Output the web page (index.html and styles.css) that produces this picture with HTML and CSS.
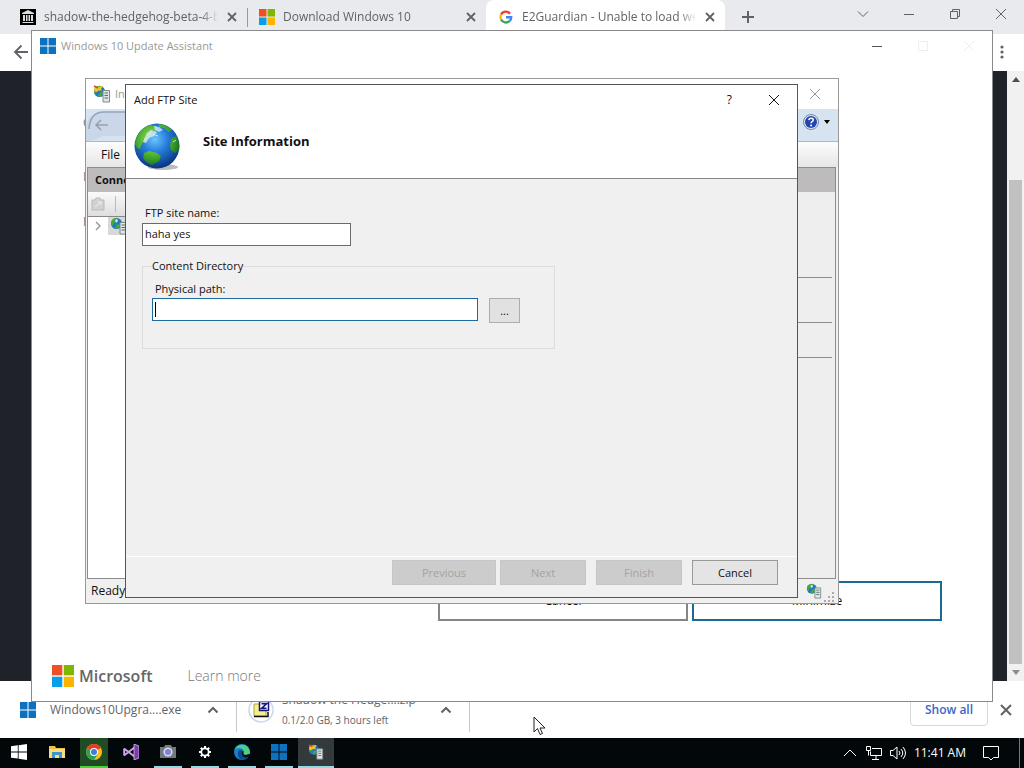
FILE: index.html
```html
<!DOCTYPE html>
<html lang="en">
<head>
    <meta charset="UTF-8">
    <meta name="viewport" content="width=device-width, initial-scale=1.0">
    <title>Add FTP Site</title>
    <link rel="stylesheet" href="styles.css">
</head>
<body>

<!-- shared icons -->
<svg class="defs" aria-hidden="true">
    <symbol id="close" viewBox="0 0 12 12"><path d="M1 1l10 10M11 1L1 11" fill="none" stroke="currentColor"/></symbol>
    <symbol id="tab-close" viewBox="0 0 16 16"><path d="M4 4l8 8M12 4l-8 8" fill="none" stroke="currentColor" stroke-width="1.8"/></symbol>
    <symbol id="minimize" viewBox="0 0 12 12"><path d="M1 6.5h10" stroke="currentColor"/></symbol>
    <symbol id="chevron-up" viewBox="0 0 14 14"><path d="M2.500 9.500L7 5l4.500 4.500" fill="none" stroke="currentColor" stroke-width="2"/></symbol>
    <symbol id="windows" viewBox="0 0 16 16"><path d="M0 0h7.500v7.500H0zM8.500 0H16v7.500H8.500zM0 8.500h7.500V16H0zM8.500 8.500H16V16H8.500z" fill="#0c72c0"/></symbol>
    <symbol id="microsoft" viewBox="0 0 16 16">
        <path d="M0 0h7.500v7.500H0z" fill="#f04e23"/><path d="M8.500 0H16v7.500H8.500z" fill="#7db700"/>
        <path d="M0 8.500h7.500V16H0z" fill="#089fe8"/><path d="M8.500 8.500H16V16H8.500z" fill="#fcb400"/>
    </symbol>
    <symbol id="server" viewBox="0 0 18 18">
        <circle cx="6.500" cy="6.500" r="5.500" fill="#1f78c4"/>
        <path d="M2 3q3-3 6-2l-1 3-3 2-1 3-2-2zM7 7l3 1-2 4-3-1z" fill="#49a63c"/>
        <path d="M5 3l2-1 1 2-2 2z" fill="#c9ecff"/>
        <path d="M10 5.500h6.500v11.500H10z" fill="#dfe7e6" stroke="#7d8c8a"/>
        <path d="M11.500 8h3.500M11.500 10.500h3.500M11.500 13h3.500" stroke="#53706d"/>
    </symbol>
    <symbol id="iis" viewBox="0 0 18 18">
        <use href="#server"/>
        <path d="M1 6l1-5 3 1 5-1-2 3 1 2-3-1-2 2z" fill="#f1c624"/>
        <path d="M1 1l4 2" stroke="#d54724" stroke-width="1.500"/>
    </symbol>
</svg>

<div class="desktop">

    <main class="browser">
        <div class="tabs">
            <div class="tab">
                <svg class="icon" viewBox="0 0 16 16"><path d="M0 0h16v16H0z"/><path d="M8 1l6 3v1H2V4zM2.500 13h11v1h-11zM3 6h2v6H3zM6 6h1.500v6H6zM8.500 6H10v6H8.500zM11 6h2v6h-2z" fill="#ddd"/></svg>
                <span class="tab-title">shadow-the-hedgehog-beta-4-b</span>
                <button class="tab-close" aria-label="Close tab"><svg class="icon"><use href="#tab-close"/></svg></button>
            </div>
            <div class="tab first">
                <svg class="icon"><use href="#microsoft"/></svg>
                <span class="tab-title">Download Windows 10</span>
                <button class="tab-close" aria-label="Close tab"><svg class="icon"><use href="#tab-close"/></svg></button>
            </div>
            <div class="tab active">
                <svg class="icon" viewBox="0 0 16 16" fill="none" stroke-width="2.400">
                    <path d="M3.100 5.500A5.300 5.300 0 0 1 12 4.700" stroke="#ea4335"/>
                    <path d="M3.100 5.500a5.300 5.300 0 0 0 0 5" stroke="#fbbc05"/>
                    <path d="M3.100 10.500A5.300 5.300 0 0 0 11.500 12.100" stroke="#34a853"/>
                    <path d="M11.500 12.100A5.300 5.300 0 0 0 13.200 8.200H8" stroke="#4285f4"/>
                </svg>
                <span class="tab-title">E2Guardian - Unable to load web</span>
                <button class="tab-close" aria-label="Close tab"><svg class="icon"><use href="#tab-close"/></svg></button>
            </div>
            <button class="new-tab" aria-label="New tab"><svg class="icon" viewBox="0 0 16 16"><path d="M8 2v12M2 8h12" stroke="currentColor" stroke-width="2"/></svg></button>
            <div class="controls">
                <button aria-label="Search tabs"><svg viewBox="0 0 12 12"><path d="M1 3.500l5 5 5-5" fill="none" stroke="currentColor"/></svg></button>
                <button aria-label="Minimize"><svg><use href="#minimize"/></svg></button>
                <button aria-label="Restore"><svg viewBox="0 0 12 12"><path d="M1.500 3.500h7v7h-7zM3.500 3.500v-2h7v7h-2" fill="none" stroke="currentColor"/></svg></button>
                <button aria-label="Close"><svg><use href="#close"/></svg></button>
            </div>
        </div>
        <div class="toolbar">
            <button aria-label="Back"><svg class="icon" viewBox="0 0 16 16"><path d="M15 8H2M8.500 1.500L2 8l6.500 6.500" fill="none" stroke="currentColor" stroke-width="1.800"/></svg></button>
            <button aria-label="Menu"><svg class="icon" viewBox="0 0 16 16" fill="currentColor"><circle cx="8" cy="3" r="1.600"/><circle cx="8" cy="8" r="1.600"/><circle cx="8" cy="13" r="1.600"/></svg></button>
        </div>
        <div class="page">
            <div class="scrollbar">
                <svg viewBox="0 0 8 5"><path d="M0 5l4-5 4 5z" fill="#505050"/></svg>
                <div class="track"><div class="thumb"></div></div>
                <svg viewBox="0 0 8 5"><path d="M0 0l4 5 4-5z" fill="#8b8b8b"/></svg>
            </div>
        </div>
        <div class="downloads">
            <div class="download">
                <svg class="icon"><use href="#windows"/></svg>
                <span class="file">Windows10Upgra....exe</span>
                <button aria-label="File options"><svg><use href="#chevron-up"/></svg></button>
            </div>
            <div class="download zip">
                <svg class="zip-icon" viewBox="0 0 26 26">
                    <circle cx="13" cy="13" r="12" fill="none" stroke="#ccd6ee" stroke-width="1.500"/>
                    <path d="M6 9V7h5l1 2h6v10H6z" fill="#f6f08b" stroke="#aaa449"/>
                    <path d="M6 19.500h14V15" fill="none" stroke="#111" stroke-width="1.500"/>
                    <path d="M11.500 4.500h9v9h-9z" fill="#fff" stroke="#15157c" stroke-width="1.500"/>
                    <path d="M13.500 6.800h5l-5 4.600h5" fill="none" stroke="#15157c" stroke-width="1.600"/>
                </svg>
                <div class="file">
                    <div>Shadow the Hedge....zip</div>
                    <div class="progress">0.1/2.0 GB, 3 hours left</div>
                </div>
                <button aria-label="File options"><svg><use href="#chevron-up"/></svg></button>
            </div>
            <button class="show-all">Show all</button>
            <button class="close-bar" aria-label="Close"><svg class="icon" viewBox="0 0 16 16"><path d="M3 3l10 10M13 3L3 13" stroke="currentColor" stroke-width="2"/></svg></button>
        </div>
    </main>

    <section class="window update">
        <header class="titlebar">
            <svg class="icon"><use href="#windows"/></svg>
            <h2>Windows 10 Update Assistant</h2>
            <div class="controls">
                <button aria-label="Minimize"><svg><use href="#minimize"/></svg></button>
                <button aria-label="Maximize" disabled><svg viewBox="0 0 12 12"><path d="M1.500 1.500h9v9h-9z" fill="none" stroke="currentColor"/></svg></button>
                <button aria-label="Close" disabled><svg><use href="#close"/></svg></button>
            </div>
        </header>
        <div class="update-body">
            <p class="lead">C</p>
            <p>I</p>
            <p>P</p>
        </div>
        <div class="update-buttons">
            <button>Cancel</button>
            <button class="primary">Minimize</button>
        </div>
        <footer class="brand">
            <svg><use href="#microsoft"/></svg>
            <strong>Microsoft</strong>
            <a href="#">Learn more</a>
        </footer>
    </section>

    <section class="window iis">
        <header class="titlebar">
            <svg><use href="#iis"/></svg>
            <h2>In</h2>
            <button aria-label="Close"><svg><use href="#close"/></svg></button>
        </header>
        <div class="iis-nav">
            <svg class="back" viewBox="0 0 50 32">
                <path d="M0 32V16Q4 3 17 3h33v24H17Q8 32 0 32z" fill="#c9d7e9"/>
                <path d="M3 20Q4 3 18 3h32" fill="none" stroke="#93a5bd" stroke-width="1.500"/>
                <path d="M22 16H10M15 11l-5 5 5 5" fill="none" stroke="#96a0ac" stroke-width="1.500"/>
            </svg>
            <button class="help" aria-label="Help">
                <svg class="icon" viewBox="0 0 16 16">
                    <circle cx="8" cy="8" r="7.500" fill="#dce5f4" stroke="#6f87ab"/>
                    <circle cx="8" cy="8" r="6" fill="#2443ad"/>
                    <path d="M5.800 6.200Q6 4.300 8.100 4.300T10.300 6Q10.300 7 9 7.700 8.100 8.200 8.100 9.300" fill="none" stroke="#fff" stroke-width="1.500"/>
                    <circle cx="8.100" cy="11.500" r="1" fill="#fff"/>
                </svg>
                <svg class="drop" viewBox="0 0 6 4"><path d="M0 0h6L3 4z"/></svg>
            </button>
        </div>
        <div class="iis-menu"><button>File</button></div>
        <div class="iis-content">
            <aside class="connections">
                <h3>Conne</h3>
                <div class="tools">
                    <svg class="icon" viewBox="0 0 16 16"><path d="M2 4h3l1-2h4l1 2h3v10H2z" fill="#d2d2d2" stroke="#bbb"/><path d="M5 11l6-5M8 6h3v3" fill="none" stroke="#eee"/></svg>
                </div>
                <div class="tree">
                    <svg class="expand" viewBox="0 0 6 10"><path d="M1 1l4 4-4 4" fill="none" stroke="#999" stroke-width="1.500"/></svg>
                    <svg class="node"><use href="#server"/></svg>
                </div>
            </aside>
            <aside class="actions">
                <h3></h3>
                <div class="group tall"></div>
                <div class="group"></div>
                <div class="group short"></div>
            </aside>
        </div>
        <footer class="status">
            <span>Ready</span>
            <svg class="node"><use href="#server"/></svg>
            <svg class="grip" viewBox="0 0 12 12"><path d="M8 1h2v2H8zM4 5h2v2H4zM8 5h2v2H8zM0 9h2v2H0zM4 9h2v2H4zM8 9h2v2H8z" fill="#aaa"/></svg>
        </footer>
    </section>

    <form class="window dialog">
        <header class="titlebar">
            <h1>Add FTP Site</h1>
            <button type="button" class="question" aria-label="Help">?</button>
            <button type="button" aria-label="Close"><svg><use href="#close"/></svg></button>
        </header>
        <div class="banner">
            <svg class="globe" viewBox="0 0 50 50">
                <defs>
                    <radialGradient id="sea" cx=".45" cy=".35" r=".65">
                        <stop offset="0" stop-color="#6cc5ff"/>
                        <stop offset=".45" stop-color="#257cd8"/>
                        <stop offset="1" stop-color="#0b3580"/>
                    </radialGradient>
                    <radialGradient id="land" gradientUnits="userSpaceOnUse" cx="21" cy="18" r="28">
                        <stop offset="0" stop-color="#b5e86a"/>
                        <stop offset=".6" stop-color="#45ad2d"/>
                        <stop offset="1" stop-color="#18661e"/>
                    </radialGradient>
                </defs>
                <ellipse cx="30" cy="45" rx="15" ry="3" fill="#bbb"/>
                <circle cx="24" cy="24" r="22.500" fill="url(#sea)"/>
                <path d="M2 22Q4 8 16 3l7 1 1 4-5 1-1 4-4 1-1 4-4 3-2 6-3-1zM26 2q8 1 13 6l-3 2-5-4-5-1zM11 31l5-2 8 2 4 3-2 5-7 4q-6-2-9-7zM39 16l4-2q4 6 3 14l-4 3-4-3-1-5z" fill="url(#land)"/>
                <path d="M14 11l4-3 6 2-3 4-5 2-3 5-3-1zM21 4l5 1 4 3-4 2-4-2z" fill="#e8f8ff" opacity=".7"/>
                <path d="M11 17l6-2M20 12l5 2M40 20l3-2" stroke="#dcf1a0"/>
            </svg>
            <h2>Site Information</h2>
        </div>
        <div class="fields">
            <label for="siteName">FTP site name:</label>
            <input type="text" id="siteName" class="site-name" value="haha yes">
            <fieldset>
                <legend>Content Directory</legend>
                <label for="physicalPath">Physical path:</label>
                <div class="path-row">
                    <div class="path-box">
                        <input type="text" id="physicalPath" class="path" autofocus>
                        <span class="caret"></span>
                    </div>
                    <button type="button" class="browse">...</button>
                </div>
            </fieldset>
        </div>
        <footer class="wizard">
            <button type="button" class="previous" disabled>Previous</button>
            <button type="button" class="next" disabled>Next</button>
            <button type="button" disabled>Finish</button>
            <button type="button">Cancel</button>
        </footer>
    </form>

    <svg class="cursor" viewBox="0 0 13 20"><path d="M1 1v15l3.500-3.500L7 18.500l2.500-1L7 12h5z" fill="#fff" stroke="#222"/></svg>

    <nav class="taskbar">
        <button class="start" aria-label="Start"><span><svg viewBox="0 0 16 16"><path d="M0 2.300l6.800-1v6.200H0zM7.600 1.200L16 0v7.500H7.600zM0 8.400h6.800v6.200L0 13.700zM7.600 8.400H16V16l-8.400-1.200z" fill="#fff"/></svg></span></button>
        <button aria-label="File Explorer"><span><svg viewBox="0 0 16 16"><path d="M0 2h6l1 2h9v10H0z" fill="#f0bd48"/><path d="M0 5h16v9H0z" fill="#fbdc83"/><path d="M3 14V8h10v6h-3v-3H6v3z" fill="#3e95cc"/></svg></span></button>
        <button class="chrome" aria-label="Chrome"><span><svg viewBox="0 0 16 16"><circle cx="8" cy="8" r="8" fill="#fbc116"/><path d="M8 8L1.100 4A8 8 0 0 1 14.900 4z" fill="#e33b2e"/><path d="M8 8L1.100 4A8 8 0 0 0 8 16l4-6z" fill="#2ba24c"/><circle cx="8" cy="8" r="4" fill="#fff"/><circle cx="8" cy="8" r="3" fill="#3e7de0"/></svg></span></button>
        <button aria-label="Visual Studio"><span><svg viewBox="0 0 16 16"><path d="M1 4.500l10.500 8M1 11.500l10.500-8M1.200 4.500v7" fill="none" stroke="#c9a2e8" stroke-width="2"/><path d="M11 0l5 2v12l-5 2z" fill="#7b3ca9" stroke="#e5d0f1" stroke-width=".7"/></svg></span></button>
        <button class="open" aria-label="Camera"><span><svg viewBox="0 0 16 16"><path d="M0 3h4l1-2h6l1 2h4v11H0z" fill="#74777c"/><circle cx="8" cy="8" r="4.600" fill="#d6d8ee"/><circle cx="8" cy="8" r="3" fill="#7f83cf"/></svg></span></button>
        <button class="open" aria-label="Settings"><span><svg viewBox="0 0 16 16" fill="none" stroke="#fff"><circle cx="8" cy="8" r="3.700" stroke-width="1.800"/><path d="M8 2v2.500M8 11.500V14M2 8h2.500M11.500 8H14M3.800 3.800l1.700 1.700M10.500 10.500l1.700 1.700M12.200 3.800l-1.700 1.700M5.500 10.500l-1.700 1.700" stroke-width="2"/></svg></span></button>
        <button class="open" aria-label="Edge"><span><svg viewBox="0 0 16 16"><circle cx="8" cy="8" r="8" fill="#187fd2"/><path d="M.5 6A8 8 0 0 1 16 8q0 3-4 3-3 0-2-3Q9 4 5 4 2 4 .5 6z" fill="#4ed081"/><path d="M4 8q2-4 5-1-2 2-.500 4 2 2 6 1-3 5-8 3.500Q3 13 4 8z" fill="#0c4c91"/><path d="M10 7q-2 3 1 4l5-1v3l-5 .5Q7 12 8 8z" fill="#071114"/></svg></span></button>
        <button class="open" aria-label="Windows 10 Update Assistant"><span><svg><use href="#windows"/></svg></span></button>
        <button class="open current" aria-label="IIS Manager"><span><svg><use href="#iis"/></svg></span></button>
        <div class="tray">
            <svg viewBox="0 0 16 16"><path d="M2 11l6-6 6 6"/></svg>
            <svg viewBox="0 0 16 16"><path d="M6 3.500h9.500v7H4.500v-4M10 10.500v4M6 14.500h7M.5 1.500h4v4h-4zM2.500 5.500v5"/></svg>
            <svg viewBox="0 0 16 16"><path d="M.5 5.500h2.500l4-3.500v12L3 10.500H.5zM9 6q2 2 0 4M11 4q3.500 4 0 8M13 2q5 6 0 12"/></svg>
            <time>11:41 AM</time>
            <svg viewBox="0 0 16 16"><path d="M.5 1.500h15v11h-5L8 15l-2.500-2.500h-5z"/></svg>
            <button class="show-desktop" aria-label="Show desktop"></button>
        </div>
    </nav>
</div>

</body>
</html>
```

FILE: styles.css
```css
* {
    box-sizing: border-box;
}
body {
    margin: 0;
    font-family: "Open Sans", "Noto Sans", sans-serif;
    font-size: 11px;
    line-height: 16px;
    color: #111;
}
h1, h2, h3, p {
    margin: 0;
    font-size: inherit;
    font-weight: normal;
}
button {
    display: flex;
    align-items: center;
    justify-content: center;
    padding: 0;
    border: none;
    background: none;
    color: inherit;
    font: inherit;
}
input {
    display: block;
    height: 23px;
    padding: 0 2px 2px;
    border: 1px solid #6b6b6b;
    background: #fff;
    font: inherit;
    color: inherit;
}
svg {
    flex: none;
    width: 12px;
    height: 12px;
}
.defs {
    position: absolute;
    width: 0;
    height: 0;
}
.icon {
    width: 16px;
    height: 16px;
}
.desktop {
    position: relative;
    display: flex;
    flex-direction: column;
    height: 100vh;
    overflow: hidden;
}

/* browser */
.browser {
    flex: 1;
    display: flex;
    flex-direction: column;
    min-height: 0;
    color: #5f6368;
}
.tabs {
    display: flex;
    height: 34px;
    padding-left: 8px;
    background: #e8eaed;
}
.tab {
    flex: 0 1 239px;
    display: flex;
    align-items: center;
    gap: 8px;
    min-width: 0;
    padding: 0 7px 0 12px;
    font-size: 12px;
}
.tab.first {
    background: linear-gradient(#999, #999) left center / 1px 19px no-repeat;
}
.tab.active {
    border-radius: 8px 8px 0 0;
    background: #fff;
}
.tab-title {
    flex: 1;
    margin-right: -6px;
    overflow: hidden;
    white-space: nowrap;
    -webkit-mask-image: linear-gradient(90deg, #000 88%, transparent 98%);
    mask-image: linear-gradient(90deg, #000 88%, transparent 98%);
}
.new-tab {
    width: 46px;
}
.controls {
    display: flex;
    margin-left: auto;
}
.controls button {
    width: 46px;
    height: 28px;
}
.toolbar {
    display: flex;
    justify-content: space-between;
    height: 37px;
    padding: 0 14px 2px 13px;
    background: #fff;
}
.page {
    flex: 1;
    display: flex;
    justify-content: flex-end;
    background: #1f2329;
}
.scrollbar {
    display: flex;
    flex-direction: column;
    align-items: center;
    gap: 6px;
    width: 17px;
    padding: 6px 2px;
    background: #f1f1f1;
}
.scrollbar svg {
    width: 8px;
    height: 5px;
}
.track {
    flex: 1;
    display: flex;
    align-items: flex-end;
    width: 100%;
}
.thumb {
    width: 100%;
    height: 84%;
    background: #c1c1c1;
}
.downloads {
    display: flex;
    align-items: center;
    height: 57px;
    padding-right: 10px;
    background: #fff;
}
.download {
    display: flex;
    align-items: center;
    gap: 14px;
    width: 237px;
    height: 44px;
    padding: 0 16px 0 20px;
    border-right: 1px solid #c8c8c8;
    font-size: 12px;
}
.download.zip {
    gap: 8px;
    width: 233px;
    padding-left: 11px;
}
.download button svg {
    width: 14px;
    height: 14px;
}
.file {
    flex: 1;
    white-space: nowrap;
    line-height: 20px;
}
.progress {
    font-size: 10px;
}
.zip-icon {
    width: 26px;
    height: 26px;
}
.show-all {
    width: 78px;
    height: 32px;
    margin-left: auto;
    border: 1px solid #d5d8dc;
    border-radius: 4px;
    color: #3b67c5;
    font-size: 12px;
    font-weight: 600;
}
.close-bar {
    margin-left: 10px;
}

/* windows */
.window {
    position: absolute;
    display: flex;
    flex-direction: column;
    overflow: hidden;
    background: #fff;
}
.titlebar {
    display: flex;
    align-items: center;
    height: 30px;
}
.update {
    inset: 30px 31px 66px 31px;
    border: 1px solid #8a8a8a;
}
.update .titlebar {
    gap: 5px;
    padding-left: 8px;
    color: #999;
}
.update .controls {
    color: #555;
}
.update .controls button:disabled {
    color: #eee;
}
.update-body {
    flex: 1;
    padding: 54px 51px;
    color: #777;
    font-size: 12px;
}
.update-body p {
    margin-bottom: 29px;
}
.update-body .lead {
    margin-bottom: 38px;
}
.update-buttons {
    display: flex;
    justify-content: flex-end;
    gap: 4px;
    padding-right: 50px;
}
.update-buttons button {
    width: 250px;
    height: 40px;
    border: 2px solid #858585;
    font-size: 12px;
}
.update-buttons .primary {
    border-color: #1b6a94;
}
.brand {
    display: flex;
    align-items: center;
    gap: 5px;
    height: 80px;
    padding: 30px 20px 0;
}
.brand svg {
    width: 22px;
    height: 22px;
}
.brand strong {
    color: #666;
    font-size: 16px;
    font-weight: 600;
}
.brand a {
    margin-left: 30px;
    color: #777;
    font-size: 14px;
    font-weight: 300;
    text-decoration: none;
}

/* IIS manager */
.iis {
    inset: 78px 185px 164px 85px;
    border: 1px solid #999;
    background: #f0f0f0;
}
.iis .titlebar {
    gap: 4px;
    padding: 0 17px 0 7px;
    background: #fff;
    color: #999;
}
.iis .titlebar > svg {
    width: 18px;
    height: 18px;
}
.iis .titlebar button {
    margin-left: auto;
}
.iis-nav {
    display: flex;
    justify-content: space-between;
    height: 33px;
    padding-right: 8px;
    border-bottom: 1px solid #aab9c9;
    background: #d6e3f1;
}
.back {
    width: 50px;
    height: 32px;
}
.help {
    gap: 5px;
    height: 26px;
}
.drop {
    width: 6px;
    height: 4px;
}
.iis-menu {
    display: flex;
    height: 25px;
    padding-left: 15px;
    background: linear-gradient(#fdfdfd, #e6e6e6);
    font-size: 12px;
}
.iis-content {
    flex: 1;
    display: flex;
    justify-content: space-between;
    margin: 0 2px 0 1px;
    border: 1px solid #8d8d8d;
}
.iis-content h3 {
    height: 24px;
    padding: 4px 7px;
    background: #bdbbbb;
    font-weight: bold;
}
.connections {
    display: flex;
    flex-direction: column;
    width: 50%;
    background: #fff;
}
.tools {
    height: 25px;
    padding: 4px 2px;
    border-bottom: 1px solid #888;
    background: linear-gradient(90deg, #bbb, #bbb) 27px center / 1px 16px no-repeat, linear-gradient(#fafafa, #dedede);
}
.tree {
    display: flex;
    align-items: center;
    gap: 7px;
    height: 18px;
    padding-left: 7px;
}
.expand {
    width: 6px;
    height: 10px;
}
.node {
    width: 16px;
    height: 16px;
}
.tree .node {
    width: 22px;
    height: 18px;
    background: #d8d8d8;
}
.actions {
    width: 50%;
    background: #eee;
}
.group {
    height: 45px;
    margin-right: 3px;
    border-bottom: 1px solid #8c8c8c;
}
.group.tall {
    height: 86px;
}
.group.short {
    height: 35px;
}
.status {
    display: flex;
    align-items: center;
    height: 24px;
    padding: 0 2px 0 5px;
    font-size: 12px;
}
.status .node {
    margin-left: auto;
}
.grip {
    margin-left: 2px;
    align-self: flex-end;
}

/* add site dialog */
.dialog {
    inset: 84px 226px 170px 125px;
    border: 1px solid #555;
    background: #f0f0f0;
}
.dialog .titlebar {
    gap: 36px;
    padding: 0 17px 0 8px;
    background: #fff;
}
.dialog .titlebar h1 {
    margin-right: auto;
}
.question {
    font-size: 12px;
}
.banner {
    display: flex;
    gap: 20px;
    height: 64px;
    padding: 7px 7px 0;
    border-bottom: 1px solid #888;
    background: #fff;
}
.banner h2 {
    padding-top: 11px;
    font-size: 13px;
    font-weight: bold;
}
.globe {
    width: 50px;
    height: 50px;
}
.fields {
    flex: 1;
    padding: 26px 16px;
}
.fields label {
    display: block;
    padding-left: 3px;
}
.site-name {
    width: 209px;
    margin-top: 2px;
}
fieldset {
    width: 413px;
    max-width: 100%;
    height: 91px;
    margin: 12px 0 0;
    padding: 7px 9px;
    border: 1px solid #dcdcdc;
}
legend {
    padding: 0;
}
.path-row {
    display: flex;
    gap: 11px;
    margin-top: 1px;
}
.path-box {
    position: relative;
    width: 326px;
}
.path {
    width: 100%;
    outline: none;
    caret-color: transparent;
}
.path:focus {
    border-color: #1d6a9f;
}
.caret {
    display: none;
    position: absolute;
    top: 4px;
    left: 3px;
    width: 1px;
    height: 15px;
    background: #000;
}
.path:focus:placeholder-shown + .caret,
.path:focus + .caret {
    display: block;
}
.browse {
    width: 31px;
    height: 25px;
    border: 1px solid #adadad;
    background: #e1e1e1;
}
.wizard {
    display: flex;
    justify-content: flex-end;
    gap: 10px;
    height: 41px;
    padding: 3px 19px;
    border-top: 1px solid #fff;
}
.wizard button {
    width: 86px;
    height: 25px;
    border: 1px solid #999;
    background: #e4e4e4;
}
.wizard button:disabled {
    border-color: #c6c6c6;
    background: #ccc;
    color: #a3a3a3;
}
.wizard .previous {
    width: 104px;
}
.wizard .next {
    margin-left: -6px;
}

/* mouse pointer */
.cursor {
    position: absolute;
    top: 716px;
    left: 533px;
    width: 13px;
    height: 20px;
}

/* taskbar */
.taskbar {
    display: flex;
    height: 30px;
    background: #020809;
    color: #fff;
}
.taskbar button {
    width: 37px;
}
.taskbar .start {
    width: 38px;
}
.taskbar span {
    display: flex;
    align-items: center;
    justify-content: center;
    width: 28px;
    height: 30px;
    border-bottom: 2px solid transparent;
}
.taskbar svg {
    width: 16px;
    height: 16px;
}
.taskbar .open span {
    border-color: #8edbe3;
}
.taskbar .chrome span {
    border-color: #43d62f;
    background: #214b24;
}
.taskbar .current span {
    width: 36px;
    background: #343a3c;
}
.tray {
    display: flex;
    align-items: center;
    gap: 8px;
    margin-left: auto;
    font-size: 12px;
}
.tray svg {
    fill: none;
    stroke: #fff;
}
.tray time {
    margin-right: 9px;
}
.tray .show-desktop {
    width: 5px;
    height: 30px;
    margin-left: 12px;
    border-left: 1px solid #777;
}
```
